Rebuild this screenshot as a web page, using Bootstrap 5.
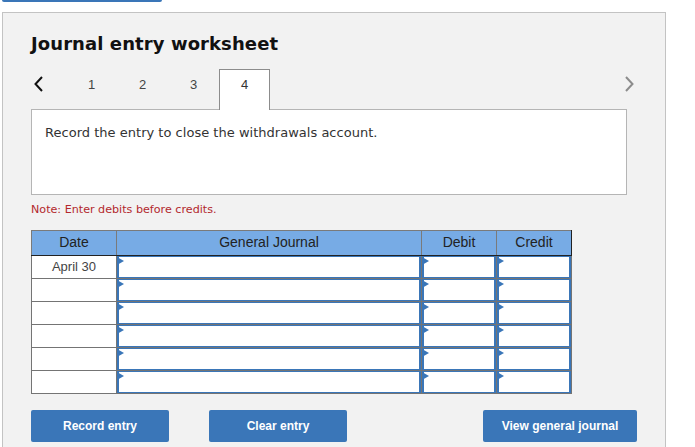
<!DOCTYPE html>
<html lang="en">
<head>
  <meta charset="UTF-8">
  <meta name="viewport" content="width=device-width, initial-scale=1.0">
  <title>Journal entry worksheet</title>
  <link href="https://cdn.jsdelivr.net/npm/bootstrap@5.3.0/dist/css/bootstrap.min.css" rel="stylesheet">
  <style>
    body {
      background: #fff;
      height: 447px;
      overflow: hidden;
      font-family: "Liberation Sans", Arial, sans-serif;
      color: #333;
    }
    .top-stub {
      width: 160px;
      height: 2px;
      margin-left: 2px;
      background: #3a76b8;
      border-radius: 0 0 3px 3px;
    }
    .sheet {
      width: 664px;
      height: 435px;
      margin: 10px 0 0 2px;
      padding: 0 30px 0 28px;
      background: #f2f2f2;
      border: 1px solid #c3c3c3;
      border-bottom: 0;
    }
    .sheet-title {
      margin: 0;
      padding-top: 20px;
      height: 56px;
      font: bold 18px/22px "DejaVu Sans", Verdana, sans-serif;
      letter-spacing: .09px;
      color: #111;
    }
    .step-bar {
      height: 41px;
      border: 0;
      flex-wrap: nowrap;
      position: relative;
      z-index: 1;
    }
    .step-arrow {
      width: 35px;
      padding: 2px 0 0 2px;
    }
    .step-bar .nav-link {
      width: 51px;
      height: 41px;
      padding: 8px 0 0;
      margin: 0;
      border: 0;
      border-radius: 0;
      text-align: center;
      font-size: 13px;
      line-height: 16px;
      color: #444;
      background: transparent;
    }
    .step-bar .nav-link.active {
      background: #fff;
      border: 1px solid #8c8c8c;
      border-bottom: 0;
      color: #333;
      padding-top: 7px;
    }
    .step-next {
      margin-left: auto;
      width: 12px;
      padding-top: 2px;
    }
    .prompt-box {
      width: 596px;
      height: 86px;
      margin-top: -1px;
      padding: 14px 13px;
      background: #fff;
      border: 1px solid #b5b5b5;
      font: 13px/18px "DejaVu Sans", Verdana, sans-serif;
      letter-spacing: .02px;
      color: #333;
    }
    .note-line {
      height: 35px;
      padding-top: 8px;
      font: 11.15px/14px "DejaVu Sans", Verdana, sans-serif;
      color: #b3282d;
    }
    .journal {
      width: 540px;
      margin: 0;
      table-layout: fixed;
      border-collapse: collapse;
      font-size: 14px;
    }
    .journal th {
      height: 25px;
      padding: 0 0 2px;
      background: #77abe5;
      border: 1px solid #7a7a7a;
      border-bottom: 1px solid #222;
      border-left-color: #222;
      text-align: center;
      vertical-align: middle;
      font-weight: 500;
      line-height: 22px;
      color: #222;
    }
    .journal th:first-child {
      border-left-color: #7a7a7a;
    }
    .journal th:last-child {
      border-right-color: #222;
    }
    .journal td {
      height: 23px;
      padding: 0;
      background: #fff;
      border: 1px solid #747474;
      text-align: center;
      vertical-align: middle;
      font-size: 13px;
      line-height: 20px;
      color: #444;
    }
    .journal td.entry-cell {
      position: relative;
      box-shadow: inset 2px 0 0 #3a76b8, inset -2px 0 0 #3a76b8, inset 0 1px 0 #3a76b8, inset 0 -1px 0 #3a76b8;
    }
    .journal td.entry-cell::before {
      content: "";
      position: absolute;
      left: 0;
      top: 1px;
      border-left: 7px solid #3a76b8;
      border-top: 4px solid transparent;
      border-bottom: 4px solid transparent;
    }
    .action-row {
      width: 606px;
      margin-top: 16px;
    }
    .action-btn {
      height: 32px;
      padding: 0;
      background: #3a76b8;
      border: 0;
      border-radius: 2px;
      font-size: 12px;
      font-weight: 700;
      line-height: 32px;
      color: #fff;
    }
    .btn-record, .btn-clear { width: 138px; }
    .btn-clear { margin-left: 40px; }
    .btn-view { width: 154px; margin-left: auto; }
  </style>
</head>
<body>
  <div class="top-stub"></div>
  <div class="sheet">
    <h1 class="sheet-title">Journal entry worksheet</h1>

    <div class="d-flex">
      <div class="step-arrow">
        <svg width="12" height="18" viewBox="0 0 12 18"><path d="M9 2 L2.5 9 L9 16" fill="none" stroke="#111" stroke-width="2"/></svg>
      </div>
      <ul class="nav nav-tabs step-bar">
        <li class="nav-item"><a class="nav-link" href="#">1</a></li>
        <li class="nav-item"><a class="nav-link" href="#">2</a></li>
        <li class="nav-item"><a class="nav-link" href="#">3</a></li>
        <li class="nav-item"><a class="nav-link active" href="#">4</a></li>
      </ul>
      <div class="step-next">
        <svg width="12" height="18" viewBox="0 0 12 18"><path d="M3 2 L9.5 9 L3 16" fill="none" stroke="#8c8c8c" stroke-width="2"/></svg>
      </div>
    </div>

    <div class="prompt-box">Record the entry to close the withdrawals account.</div>
    <div class="note-line">Note: Enter debits before credits.</div>

    <table class="journal">
      <colgroup>
        <col style="width: 85px">
        <col style="width: 305px">
        <col style="width: 75px">
        <col style="width: 75px">
      </colgroup>
      <thead>
        <tr><th>Date</th><th>General Journal</th><th>Debit</th><th>Credit</th></tr>
      </thead>
      <tbody>
        <tr><td>April 30</td><td class="entry-cell"></td><td class="entry-cell"></td><td class="entry-cell"></td></tr>
        <tr><td></td><td class="entry-cell"></td><td class="entry-cell"></td><td class="entry-cell"></td></tr>
        <tr><td></td><td class="entry-cell"></td><td class="entry-cell"></td><td class="entry-cell"></td></tr>
        <tr><td></td><td class="entry-cell"></td><td class="entry-cell"></td><td class="entry-cell"></td></tr>
        <tr><td></td><td class="entry-cell"></td><td class="entry-cell"></td><td class="entry-cell"></td></tr>
        <tr><td></td><td class="entry-cell"></td><td class="entry-cell"></td><td class="entry-cell"></td></tr>
      </tbody>
    </table>

    <div class="d-flex action-row">
      <button class="btn action-btn btn-record">Record entry</button>
      <button class="btn action-btn btn-clear">Clear entry</button>
      <button class="btn action-btn btn-view">View general journal</button>
    </div>
  </div>
  <script src="https://cdn.jsdelivr.net/npm/bootstrap@5.3.0/dist/js/bootstrap.bundle.min.js"></script>
</body>
</html>
